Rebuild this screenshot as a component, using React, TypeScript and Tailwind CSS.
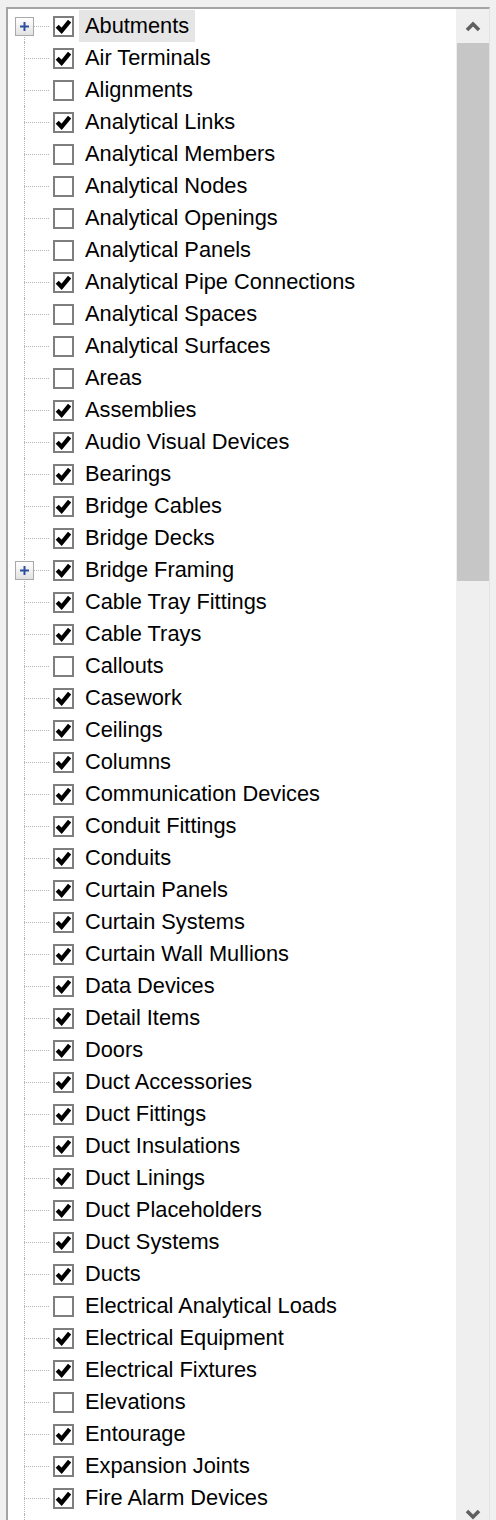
import React from 'react';

type Item = { name: string; checked: boolean; expandable?: boolean; selected?: boolean };

const items: Item[] = [
  { name: 'Abutments', checked: true, expandable: true, selected: true },
  { name: 'Air Terminals', checked: true },
  { name: 'Alignments', checked: false },
  { name: 'Analytical Links', checked: true },
  { name: 'Analytical Members', checked: false },
  { name: 'Analytical Nodes', checked: false },
  { name: 'Analytical Openings', checked: false },
  { name: 'Analytical Panels', checked: false },
  { name: 'Analytical Pipe Connections', checked: true },
  { name: 'Analytical Spaces', checked: false },
  { name: 'Analytical Surfaces', checked: false },
  { name: 'Areas', checked: false },
  { name: 'Assemblies', checked: true },
  { name: 'Audio Visual Devices', checked: true },
  { name: 'Bearings', checked: true },
  { name: 'Bridge Cables', checked: true },
  { name: 'Bridge Decks', checked: true },
  { name: 'Bridge Framing', checked: true, expandable: true },
  { name: 'Cable Tray Fittings', checked: true },
  { name: 'Cable Trays', checked: true },
  { name: 'Callouts', checked: false },
  { name: 'Casework', checked: true },
  { name: 'Ceilings', checked: true },
  { name: 'Columns', checked: true },
  { name: 'Communication Devices', checked: true },
  { name: 'Conduit Fittings', checked: true },
  { name: 'Conduits', checked: true },
  { name: 'Curtain Panels', checked: true },
  { name: 'Curtain Systems', checked: true },
  { name: 'Curtain Wall Mullions', checked: true },
  { name: 'Data Devices', checked: true },
  { name: 'Detail Items', checked: true },
  { name: 'Doors', checked: true },
  { name: 'Duct Accessories', checked: true },
  { name: 'Duct Fittings', checked: true },
  { name: 'Duct Insulations', checked: true },
  { name: 'Duct Linings', checked: true },
  { name: 'Duct Placeholders', checked: true },
  { name: 'Duct Systems', checked: true },
  { name: 'Ducts', checked: true },
  { name: 'Electrical Analytical Loads', checked: false },
  { name: 'Electrical Equipment', checked: true },
  { name: 'Electrical Fixtures', checked: true },
  { name: 'Elevations', checked: false },
  { name: 'Entourage', checked: true },
  { name: 'Expansion Joints', checked: true },
  { name: 'Fire Alarm Devices', checked: true },
  { name: 'Fire Protection', checked: true },
];

function CheckBox({ checked }: { checked: boolean }) {
  return (
    <div className="w-[21px] h-[21px] shrink-0 border-2 border-[#7e7e7e] bg-white flex items-center justify-center">
      {checked && (
        <svg width="17" height="17" viewBox="0 0 17 17">
          <path d="M2.2 8.2 L6.6 12.8 L14.6 3.2" fill="none" stroke="#000" strokeWidth="4.2" strokeLinejoin="miter" />
        </svg>
      )}
    </div>
  );
}

function Expander() {
  return (
    <div className="absolute left-[7px] top-[7px] w-[19px] h-[19px] border border-[#a9a9a9] bg-gradient-to-b from-white to-[#e2e2e2] flex items-center justify-center">
      <svg width="11" height="11" viewBox="0 0 11 11">
        <path d="M1 5.5 H10 M5.5 1 V10" stroke="#2c4f9e" strokeWidth="2" />
      </svg>
    </div>
  );
}

function Row({ item, first }: { item: Item; first: boolean }) {
  return (
    <div className="flex items-center h-[32px]">
      {/* tree lines */}
      <div className="relative w-[45px] h-full shrink-0">
        <div
          className={`absolute left-[16px] bottom-0 border-l border-dotted border-[#b4b4b4] ${
            first ? 'top-[16px]' : 'top-0'
          }`}
        />
        <div className="absolute left-[16px] w-[25px] top-[16px] border-t border-dotted border-[#b4b4b4]" />
        {item.expandable && <Expander />}
      </div>
      <CheckBox checked={item.checked} />
      <div
        className={`ml-[5px] px-[6px] h-full flex items-center whitespace-nowrap text-[21.8px] leading-[32px] text-black ${
          item.selected ? 'bg-[#e5e5e5]' : ''
        }`}
      >
        {item.name}
      </div>
    </div>
  );
}

export default function App() {
  return (
    <div
      className="w-[496px] h-[1520px] bg-[#f0f0f0] overflow-hidden pt-[7px] pl-[6px]"
      style={{ fontFamily: '"Liberation Sans", Arial, sans-serif' }}
    >
      <div className="w-[484px] h-[1524px] flex border-l-2 border-t-2 border-r border-[#a4a4a4] border-r-[#e2e2e2]">
        <div className="flex-1 bg-white overflow-hidden pt-[1px]">
          {items.map((it, i) => (
            <Row key={it.name} item={it} first={i === 0} />
          ))}
        </div>
        {/* scrollbar */}
        <div className="w-[33px] shrink-0 bg-[#efefef] flex flex-col pl-[1px]">
          <div className="h-[34px] flex items-center justify-center">
            <svg width="16" height="11" viewBox="0 0 16 11">
              <path d="M2 9 L8 3 L14 9" fill="none" stroke="#606060" strokeWidth="3.6" />
            </svg>
          </div>
          <div className="h-[538px] bg-[#c6c6c6]" />
          <div className="flex-1" />
          <div className="h-[34px] flex items-center justify-center">
            <svg width="16" height="11" viewBox="0 0 16 11">
              <path d="M2 2 L8 8 L14 2" fill="none" stroke="#606060" strokeWidth="3.6" />
            </svg>
          </div>
        </div>
      </div>
    </div>
  );
}
